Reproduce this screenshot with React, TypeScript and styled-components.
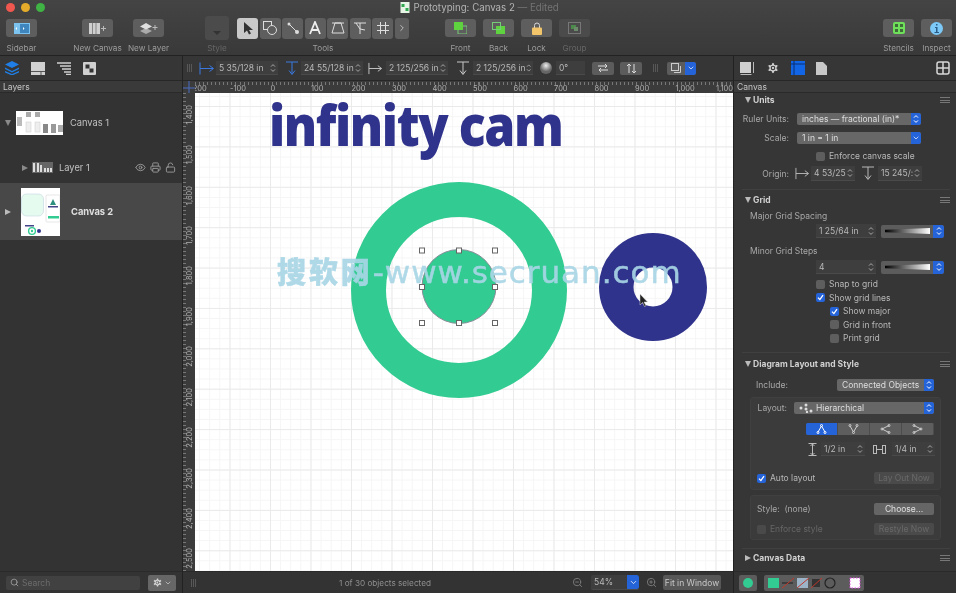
import React from 'react'
import styled, { createGlobalStyle } from 'styled-components'
import { Search, Settings, ZoomIn, ZoomOut, ChevronRight, ChevronDown, Eye, Printer, LockOpen } from 'lucide-react'

const Global = createGlobalStyle`
    html, body {
        margin: 0;
        width: 956px;
        height: 593px;
        overflow: hidden;
        background: #333;
    }
    * {
        box-sizing: border-box;
    }
`

const BLUE = '#2563d8'

const Root = styled.div`
    width: 956px;
    height: 593px;
    display: flex;
    flex-direction: column;
    background: #333;
    color: #cfcfcf;
    font-family: Inter, "Liberation Sans", sans-serif;
    font-size: 8.5px;
    filter: blur(0.55px);
    overflow: hidden;
    position: relative;
`

/* top toolbar */
const Toolbar = styled.div`
    height: 56px;
    flex: none;
    background: linear-gradient(#444, #393939);
    border-bottom: 1px solid #222;
`
const TitleRow = styled.div`
    height: 15px;
    display: flex;
    align-items: center;
    padding-left: 5.5px;
    position: relative;
`
const Light = styled.span<{ $c: string }>`
    width: 9.5px;
    height: 9.5px;
    border-radius: 50%;
    margin-right: 5.5px;
    background: ${p => p.$c};
`
const Title = styled.div`
    margin-left: 349px;
    display: flex;
    align-items: center;
    gap: 4px;
    font-size: 9.7px;
    color: #b4b4b4;
    white-space: nowrap;
    & em {
        font-style: normal;
        color: #747474;
    }
`
const ToolRow = styled.div`
    display: flex;
    padding-left: 6px;
`
const ToolItem = styled.div<{ $w: number; $ml?: number; $mr?: number; $auto?: boolean }>`
    width: ${p => p.$w}px;
    margin-left: ${p => (p.$auto ? 'auto' : `${p.$ml || 0}px`)};
    margin-right: ${p => p.$mr || 0}px;
    flex: none;
    display: flex;
    flex-direction: column;
    align-items: center;
`
const ToolSlot = styled.div`
    height: 26px;
    width: 100%;
    display: flex;
    align-items: center;
    justify-content: space-between;
    gap: 1px;
`
const ToolLabel = styled.div<{ $off?: boolean }>`
    margin-top: 2px;
    font-size: 8.2px;
    line-height: 11px;
    white-space: nowrap;
    color: ${p => (p.$off ? '#666' : '#9c9c9c')};
`
const ToolBtn = styled.div<{ $w?: number; $off?: boolean; $on?: boolean; $tall?: boolean }>`
    width: ${p => (p.$w ? `${p.$w}px` : '100%')};
    height: ${p => (p.$tall ? 24 : p.$w ? 21 : 18)}px;
    flex: none;
    border-radius: 3px;
    background: ${p => (p.$on ? '#c9c9c9' : p.$off ? '#4b4b4b' : '#5e5e5e')};
    display: flex;
    align-items: center;
    justify-content: center;
`

/* body */
const Body = styled.div`
    flex: 1;
    display: flex;
    min-height: 0;
`
const LeftPane = styled.div`
    width: 183px;
    flex: none;
    display: flex;
    flex-direction: column;
    background: #333;
    border-right: 1px solid #222;
`
const CenterPane = styled.div`
    flex: 1;
    display: flex;
    flex-direction: column;
    min-width: 0;
`
const RightPane = styled.div`
    width: 223px;
    flex: none;
    display: flex;
    flex-direction: column;
    background: #363636;
    border-left: 1px solid #222;
`
const TabBar = styled.div<{ $pl: number; $gap: number }>`
    height: 25px;
    flex: none;
    display: flex;
    align-items: center;
    gap: ${p => p.$gap}px;
    padding-left: ${p => p.$pl}px;
    border-bottom: 1px solid #272727;
    background: #363636;
`
const TabEnd = styled.span`
    margin-left: auto;
    margin-right: 6px;
    display: flex;
`
const PaneTitle = styled.div<{ $pl: number }>`
    height: 12px;
    flex: none;
    line-height: 12px;
    padding-left: ${p => p.$pl}px;
    font-size: 8.5px;
    color: #c4c4c4;
    background: #3a3a3a;
    border-bottom: 1px solid #2a2a2a;
`
const LayerList = styled.div`
    flex: 1;
    display: flex;
    flex-direction: column;
`
const LayerRow = styled.div<{ $h: number; $sel?: boolean; $pl: number }>`
    height: ${p => p.$h}px;
    padding-left: ${p => p.$pl}px;
    display: flex;
    align-items: center;
    background: ${p => (p.$sel ? '#484848' : 'transparent')};
    color: ${p => (p.$sel ? '#e0e0e0' : '#c0c0c0')};
    font-weight: ${p => (p.$sel ? 700 : 400)};
    font-size: 9.3px;
    white-space: nowrap;
`
const Thumb = styled.div<{ $w: number; $h: number; $ml: number; $mr: number; $bg?: string }>`
    width: ${p => p.$w}px;
    height: ${p => p.$h}px;
    margin-left: ${p => p.$ml}px;
    margin-right: ${p => p.$mr}px;
    flex: none;
    background: ${p => p.$bg || '#fff'};
    & svg {
        display: block;
    }
`
const LayerName = styled.span`
    width: 33px;
    flex: none;
`
const RowIcons = styled.div`
    margin-left: 43px;
    display: flex;
    gap: 4px;
    color: #9a9a9a;
`
const Tri = styled.span<{ $down?: boolean; $c?: string }>`
    width: 0;
    height: 0;
    flex: none;
    ${p =>
        p.$down
            ? `border-left: 3.5px solid transparent; border-right: 3.5px solid transparent; border-top: 6px solid ${p.$c || '#8a8a8a'};`
            : `border-top: 3.5px solid transparent; border-bottom: 3.5px solid transparent; border-left: 6px solid ${p.$c || '#8a8a8a'};`}
`
const PaneFooter = styled.div`
    height: 22px;
    flex: none;
    display: flex;
    align-items: center;
    padding-left: 6px;
    border-top: 1px solid #2a2a2a;
    background: #333;
`
const SearchBox = styled.div`
    width: 134px;
    height: 14px;
    border-radius: 2px;
    background: #414141;
    display: flex;
    align-items: center;
    gap: 3px;
    padding-left: 4px;
    color: #6c6c6c;
    font-size: 8.5px;
`
const GearBtn = styled.div`
    width: 28px;
    height: 16px;
    margin-left: 8px;
    border-radius: 2px;
    background: #666;
    color: #d8d8d8;
    display: flex;
    align-items: center;
    justify-content: center;
    gap: 1px;
`

/* format bar */
const FormatBar = styled.div`
    height: 25px;
    flex: none;
    display: flex;
    align-items: center;
    padding-left: 4px;
    background: #363636;
    border-bottom: 1px solid #272727;
`
const Grip = styled.span<{ $ml?: number }>`
    width: 6px;
    height: 8px;
    flex: none;
    margin-left: ${p => p.$ml || 0}px;
    background: repeating-linear-gradient(90deg, #585858 0 1px, transparent 1px 2px);
`
const IconWrap = styled.span<{ $w: number; $ml?: number }>`
    width: ${p => p.$w}px;
    margin-left: ${p => p.$ml || 0}px;
    flex: none;
    display: flex;
    align-items: center;
    justify-content: center;
    & svg {
        display: block;
    }
`
const Field = styled.div<{ $w: number; $ml?: number; $h?: number; $flush?: boolean }>`
    width: ${p => p.$w}px;
    height: ${p => p.$h || 14}px;
    margin-left: ${p => p.$ml || 0}px;
    flex: none;
    display: flex;
    align-items: center;
    justify-content: space-between;
    padding: 0 ${p => (p.$flush ? 0 : 2)}px 0 3px;
    background: #3e3e3e;
    border-bottom: 1px solid #4a4a4a;
    border-radius: ${p => (p.$flush ? 2 : 0)}px;
    color: #b8b8b8;
    font-size: 8.5px;
    white-space: nowrap;
    overflow: hidden;
`
const SmallBtn = styled.div<{ $w: number; $ml: number }>`
    width: ${p => p.$w}px;
    height: 13px;
    margin-left: ${p => p.$ml}px;
    flex: none;
    border-radius: 2px;
    background: #5c5c5c;
    display: flex;
    align-items: center;
    justify-content: center;
`
const BlueEnd = styled.span<{ $w?: number }>`
    width: ${p => p.$w || 10}px;
    align-self: stretch;
    flex: none;
    background: ${BLUE};
    border-radius: 0 2px 2px 0;
    display: flex;
    align-items: center;
    justify-content: center;
    color: #fff;
`
const Split = styled.div<{ $w: number; $ml: number }>`
    width: ${p => p.$w}px;
    height: 13px;
    margin-left: ${p => p.$ml}px;
    flex: none;
    display: flex;
    border-radius: 2px;
    background: #5c5c5c;
    overflow: hidden;
`
const SplitFace = styled.span`
    flex: 1;
    display: flex;
    align-items: center;
    justify-content: center;
`

/* rulers and canvas */
const TopRuler = styled.div`
    height: 12px;
    flex: none;
    display: flex;
    background: #3b3b3b;
    overflow: hidden;
`
const Corner = styled.div`
    width: 12px;
    flex: none;
    & svg {
        display: block;
    }
`
const RulerStrip = styled.div`
    flex: 1;
    overflow: hidden;
    background: repeating-linear-gradient(90deg, #777 0 1px, transparent 1px 4.05px) 0 1px / 100% 3px no-repeat;
`
const RulerCells = styled.div`
    display: flex;
    margin-left: -5.5px;
    padding-top: 3px;
`
const RulerCell = styled.span`
    width: 40.5px;
    flex: none;
    font-size: 7.5px;
    line-height: 9px;
    color: #b0b0b0;
    white-space: nowrap;
`
const Stage = styled.div`
    flex: 1;
    display: flex;
    min-height: 0;
`
const SideRuler = styled.div`
    width: 12px;
    flex: none;
    padding-top: 1.3px;
    background:
        repeating-linear-gradient(0deg, #777 0 1px, transparent 1px 4.04px) 0 0 / 3px 100% no-repeat,
        #3b3b3b;
    overflow: hidden;
`
const SideCell = styled.div`
    height: 40.4px;
    display: flex;
    align-items: center;
    justify-content: flex-end;
    padding-right: 1px;
    & span {
        writing-mode: vertical-rl;
        transform: rotate(180deg);
        font-size: 7.5px;
        line-height: 9px;
        color: #b0b0b0;
        white-space: nowrap;
    }
`
const Canvas = styled.div`
    flex: 1;
    position: relative;
    overflow: hidden;
    background-color: #fff;
    background-image:
        linear-gradient(90deg, #eaeaea 1px, transparent 1px),
        linear-gradient(#eaeaea 1px, transparent 1px),
        linear-gradient(90deg, #f5f5f5 1px, transparent 1px),
        linear-gradient(#f5f5f5 1px, transparent 1px);
    background-size: 40.5px 40.4px, 40.5px 40.4px, 10.125px 10.1px, 10.125px 10.1px;
    background-position: 34.5px 13px, 34.5px 13px, 4.1px 3px, 4.1px 3px;
`
const Drawing = styled.svg`
    position: absolute;
    left: 0;
    top: 0;
`
const Logo = styled.div`
    position: absolute;
    left: 73.5px;
    top: -2px;
    font-family: "Open Sans", "Noto Sans", sans-serif;
    font-weight: 800;
    font-size: 57px;
    line-height: 66px;
    letter-spacing: -1.6px;
    color: #30338b;
    white-space: nowrap;
    transform: scaleX(0.875);
    transform-origin: left top;
`
const Watermark = styled.div`
    position: absolute;
    left: 82px;
    top: 161px;
    font-family: "DejaVu Sans", "Noto Sans CJK SC", sans-serif;
    font-size: 31px;
    line-height: 32px;
    letter-spacing: 0.95px;
    -webkit-text-stroke: 0.5px #a9d6e6;
    color: #a9d6e6;
    opacity: 0.92;
    white-space: nowrap;
    pointer-events: none;
    & b {
        font-family: "Noto Sans CJK SC", sans-serif;
        font-weight: 900;
        font-size: 29px;
        letter-spacing: 2.9px;
    }
`
const StatusBar = styled.div`
    height: 22px;
    flex: none;
    display: flex;
    align-items: center;
    padding-left: 8px;
    background: #333;
    border-top: 1px solid #2a2a2a;
`
const StatusText = styled.div`
    width: 300px;
    margin-left: 38px;
    margin-right: 35px;
    text-align: center;
    color: #8f8f8f;
    font-size: 8.2px;
    white-space: nowrap;
`
const FitBtn = styled.div`
    width: 58px;
    height: 15px;
    margin-left: 5px;
    border-radius: 2px;
    background: #575757;
    color: #c8c8c8;
    font-size: 8.5px;
    display: flex;
    align-items: center;
    justify-content: center;
    white-space: nowrap;
`

/* inspector */
const Inspector = styled.div`
    flex: 1;
    padding: 0 6px 0 8px;
    display: flex;
    flex-direction: column;
    min-height: 0;
`
const SectionHead = styled.div<{ $mt: number }>`
    margin-top: ${p => p.$mt}px;
    height: 12px;
    display: flex;
    align-items: center;
    gap: 2px;
    padding-left: 3px;
    font-weight: 700;
    font-size: 8.5px;
    color: #d0d0d0;
    white-space: nowrap;
`
const MenuLines = styled.span`
    width: 10px;
    height: 6px;
    margin-left: auto;
    flex: none;
    border-top: 1px solid #777;
    border-bottom: 1px solid #777;
    background: linear-gradient(#777, #777) 0 50% / 100% 1px no-repeat;
`
const Rule = styled.div<{ $mt: number }>`
    margin-top: ${p => p.$mt}px;
    height: 1px;
    background: #404040;
    flex: none;
`
const FormRow = styled.div<{ $mt: number; $pl?: number }>`
    margin-top: ${p => p.$mt}px;
    padding-left: ${p => p.$pl || 0}px;
    display: flex;
    align-items: center;
    flex: none;
    min-height: 12px;
`
const FormLabel = styled.div<{ $w?: number; $right?: boolean }>`
    width: ${p => (p.$w ? `${p.$w}px` : 'auto')};
    flex: none;
    text-align: ${p => (p.$right ? 'right' : 'left')};
    color: #a8a8a8;
    font-size: 8.5px;
    white-space: nowrap;
`
const Popup = styled.div<{ $w: number; $ml?: number }>`
    width: ${p => p.$w}px;
    height: 12px;
    margin-left: ${p => p.$ml || 0}px;
    flex: none;
    display: flex;
    align-items: center;
    justify-content: space-between;
    padding-left: 5px;
    border-radius: 2px;
    background: #676767;
    color: #dedede;
    font-size: 8.5px;
    white-space: nowrap;
    overflow: hidden;
`
const PopupText = styled.span`
    display: flex;
    align-items: center;
    gap: 3px;
`
const Swatch = styled.div<{ $ml: number }>`
    width: 63px;
    height: 13px;
    margin-left: ${p => p.$ml}px;
    flex: none;
    display: flex;
    align-items: center;
    padding-left: 4px;
    border-radius: 2px;
    background: #5c5c5c;
    overflow: hidden;
`
const Gradient = styled.span`
    width: 45px;
    height: 6px;
    margin-right: auto;
    background: linear-gradient(90deg, #000, #fff);
    clip-path: polygon(0 30%, 100% 0, 100% 100%, 0 70%);
`
const CheckBox = styled.span<{ $on?: boolean; $dim?: boolean }>`
    width: 9px;
    height: 9px;
    flex: none;
    border-radius: 2px;
    background: ${p => (p.$on ? BLUE : p.$dim ? '#4a4a4a' : '#5e5e5e')};
    display: flex;
    align-items: center;
    justify-content: center;
    & svg {
        display: block;
    }
`
const CheckText = styled.span<{ $dim?: boolean }>`
    margin-left: 4px;
    color: ${p => (p.$dim ? '#666' : '#b8b8b8')};
    font-size: 8.5px;
    white-space: nowrap;
`
const Group = styled.div<{ $mt: number; $h: number }>`
    margin-top: ${p => p.$mt}px;
    margin-left: 8px;
    width: 191px;
    height: ${p => p.$h}px;
    flex: none;
    padding: 0 6px;
    border-radius: 3px;
    background: #3b3b3b;
    border: 1px solid #404040;
    display: flex;
    flex-direction: column;
`
const Segments = styled.div`
    width: 128px;
    height: 12px;
    margin-left: 49px;
    display: flex;
    border-radius: 2px;
    overflow: hidden;
    background: #5e5e5e;
`
const Segment = styled.span<{ $on?: boolean }>`
    flex: 1;
    display: flex;
    align-items: center;
    justify-content: center;
    background: ${p => (p.$on ? BLUE : 'transparent')};
    border-right: 1px solid #4c4c4c;
`
const PanelBtn = styled.div<{ $off?: boolean }>`
    width: 60px;
    height: 12px;
    margin-left: auto;
    flex: none;
    border-radius: 2px;
    background: ${p => (p.$off ? '#4a4a4a' : '#656565')};
    color: ${p => (p.$off ? '#696969' : '#e0e0e0')};
    font-size: 8.5px;
    display: flex;
    align-items: center;
    justify-content: center;
    white-space: nowrap;
`
const InspectorFooter = styled.div`
    height: 22px;
    flex: none;
    display: flex;
    align-items: center;
    padding-left: 5px;
    background: #333;
    border-top: 1px solid #2a2a2a;
`
const DotBtn = styled.div`
    width: 18px;
    height: 16px;
    border-radius: 2px;
    background: #5c5c5c;
    display: flex;
    align-items: center;
    justify-content: center;
    & span {
        width: 10px;
        height: 10px;
        border-radius: 50%;
        background: #32cb91;
    }
`
const StyleStrip = styled.div`
    width: 100px;
    height: 16px;
    margin-left: 7px;
    border-radius: 2px;
    background: #5c5c5c;
    & svg {
        display: block;
    }
`

const Updown = () => (
    <svg width="6" height="10" viewBox="0 0 6 10" fill="none" stroke="#a8a8a8" strokeWidth="1">
        <path d="M1 3.6 3 1.6 5 3.6M1 6.4 3 8.4 5 6.4" />
    </svg>
)
const UpdownWhite = () => (
    <svg width="6" height="10" viewBox="0 0 6 10" fill="none" stroke="#fff" strokeWidth="1">
        <path d="M1 3.6 3 1.6 5 3.6M1 6.4 3 8.4 5 6.4" />
    </svg>
)
const Tick = () => (
    <svg width="7" height="7" viewBox="0 0 7 7" fill="none" stroke="#fff" strokeWidth="1.3">
        <path d="M1 3.6 2.9 5.6 6 1.2" />
    </svg>
)
const HArrow = ({ c, w = 16 }: { c: string; w?: number }) => (
    <svg width={w} height="13" viewBox="0 0 16 13" fill="none" stroke={c} strokeWidth="1">
        <path d="M1 .5v12M1 6.5h13M10.5 3.5l4 3-4 3" />
    </svg>
)
const VArrow = ({ c }: { c: string }) => (
    <svg width="14" height="15" viewBox="0 0 14 15" fill="none" stroke={c} strokeWidth="1">
        <path d="M1 1h12M7 1v12M4 9.5l3 4 3-4" />
    </svg>
)

const LayersThumb = () => (
    <svg width="47" height="24" viewBox="0 0 47 24">
        <rect x="1" y="6" width="5" height="9" fill="#bbb" />
        <rect x="10" y="1" width="5" height="5" fill="#aaa" />
        <rect x="19" y="1" width="5" height="5" fill="#aaa" />
        <rect x="10" y="11" width="5" height="10" fill="#eee" stroke="#ccc" strokeWidth=".5" />
        <rect x="19" y="11" width="5" height="10" fill="#eee" stroke="#ccc" strokeWidth=".5" />
        <rect x="27" y="13" width="5" height="9" fill="#888" />
        <rect x="35" y="13" width="5" height="9" fill="#999" />
        <rect x="42" y="14" width="5" height="7" fill="#aaa" />
    </svg>
)
const Canvas2Thumb = () => (
    <svg width="39" height="48" viewBox="0 0 39 48">
        <rect x=".5" y="6" width="22" height="22" rx="5" fill="#e6fbef" stroke="#bcd" strokeWidth=".5" />
        <rect x="25" y="7" width="14" height="27" rx="1" fill="#fff" stroke="#ccc" strokeWidth=".5" />
        <path d="M32 11l3 6h-6z" fill="#2f8f7f" />
        <rect x="27" y="18" width="10" height="1.5" fill="#448" />
        <rect x="27" y="28" width="11" height="2.5" fill="#32cb91" />
        <rect x="4" y="37" width="9" height="1.5" fill="#448" />
        <circle cx="11" cy="43" r="3.4" fill="none" stroke="#32cb91" strokeWidth="1.4" />
        <circle cx="11" cy="43" r="1.2" fill="#32cb91" />
        <circle cx="18" cy="43" r="2" fill="#30338b" />
    </svg>
)

const hRuler = ['-200', '-100', '0', '100', '200', '300', '400', '500', '600', '700', '800', '900', '1,000', '1,100']
const vRuler = ['1,400', '1,500', '1,600', '1,700', '1,800', '1,900', '2,000', '2,100', '2,200', '2,300', '2,400', '2,500']
const handles = [
    [227, 157.5], [264, 157.5], [300, 157.5],
    [227, 194], [300, 194],
    [227, 230], [264, 230], [300, 230],
]

const App = () => {
    return (
        <Root>
            <Global />
            <Toolbar>
                <TitleRow>
                    <Light $c="#f0584f" />
                    <Light $c="#e4ac2a" />
                    <Light $c="#3fb344" />
                    <Title>
                        <svg width="10" height="11" viewBox="0 0 9 11"><rect width="9" height="11" fill="#e6f5e6" /><path d="M1 2h3v3H1zM5 6h3v3H5z" fill="#2fa84f" /></svg>
                        <span>Prototyping: Canvas 2 <em>— Edited</em></span>
                    </Title>
                </TitleRow>
                <ToolRow>
                    <ToolItem $w={31}>
                        <ToolSlot>
                            <ToolBtn>
                                <svg width="16" height="11" viewBox="0 0 16 11"><rect width="16" height="11" fill="#7cc3f0" /><rect x="6" y="1" width="9" height="9" fill="#3e86bd" /><path d="M3 4 1.5 5.5 3 7zM9 4l1.5 1.5L9 7z" fill="#fff" /></svg>
                            </ToolBtn>
                        </ToolSlot>
                        <ToolLabel>Sidebar</ToolLabel>
                    </ToolItem>
                    <ToolItem $w={31} $ml={45}>
                        <ToolSlot>
                            <ToolBtn>
                                <svg width="18" height="11" viewBox="0 0 18 11"><rect width="11" height="11" fill="#cfcfcf" /><path d="M3.5 0v11M7 0v11" stroke="#666" strokeWidth=".7" /><path d="M14.5 3v5M12 5.5h5" stroke="#bbb" /></svg>
                            </ToolBtn>
                        </ToolSlot>
                        <ToolLabel>New Canvas</ToolLabel>
                    </ToolItem>
                    <ToolItem $w={31} $ml={20}>
                        <ToolSlot>
                            <ToolBtn>
                                <svg width="18" height="12" viewBox="0 0 18 12"><path d="M6 6 0 9l6 3 6-3z" fill="#aaa" /><path d="M6 1 0 4.500l6 3 6-3z" fill="#e0e0e0" /><path d="M15 3v5M12.500 5.500h5" stroke="#bbb" /></svg>
                            </ToolBtn>
                        </ToolSlot>
                        <ToolLabel>New Layer</ToolLabel>
                    </ToolItem>
                    <ToolItem $w={24} $ml={41}>
                        <ToolSlot>
                            <ToolBtn $off $tall>
                                <svg width="8" height="14" viewBox="0 0 8 14"><path d="M0 10h8l-4 4z" fill="#333" /></svg>
                            </ToolBtn>
                        </ToolSlot>
                        <ToolLabel $off>Style</ToolLabel>
                    </ToolItem>
                    <ToolItem $w={172} $ml={8}>
                        <ToolSlot>
                            <ToolBtn $w={21} $on>
                                <svg width="10" height="13" viewBox="0 0 10 13"><path d="M1 0v11l3-2.500 2 4 2-1-2-3.500h4z" fill="#333" /></svg>
                            </ToolBtn>
                            <ToolBtn $w={21}>
                                <svg width="14" height="14" viewBox="0 0 14 14" fill="none" stroke="#ddd"><rect x=".5" y=".5" width="8" height="8" /><circle cx="9" cy="9" r="4.500" fill="#5e5e5e" /></svg>
                            </ToolBtn>
                            <ToolBtn $w={21}>
                                <svg width="14" height="14" viewBox="0 0 14 14" fill="#ddd"><circle cx="3" cy="3" r="1.500" /><circle cx="11" cy="11" r="2" /><path d="M3 3l8 8" stroke="#ddd" /></svg>
                            </ToolBtn>
                            <ToolBtn $w={21}>
                                <svg width="14" height="14" viewBox="0 0 14 14" fill="none" stroke="#eee" strokeWidth="1.800"><path d="M2 13 7 1l5 12M4 9h6" /></svg>
                            </ToolBtn>
                            <ToolBtn $w={21}>
                                <svg width="14" height="14" viewBox="0 0 14 14" fill="none" stroke="#ddd"><path d="M4 2h6l3 10H1zM1 2h12" /></svg>
                            </ToolBtn>
                            <ToolBtn $w={21}>
                                <svg width="14" height="14" viewBox="0 0 14 14" fill="none" stroke="#ddd"><path d="M1 2h12M7 2v11M3 2l4 6 5 1" /></svg>
                            </ToolBtn>
                            <ToolBtn $w={21}>
                                <svg width="14" height="14" viewBox="0 0 14 14" fill="none" stroke="#ddd"><path d="M4.500 1v12M9.500 1v12M1 4.500h12M1 9.500h12" /></svg>
                            </ToolBtn>
                            <ToolBtn $w={14}>
                                <ChevronRight size={10} color="#cfcfcf" />
                            </ToolBtn>
                        </ToolSlot>
                        <ToolLabel>Tools</ToolLabel>
                    </ToolItem>
                    <ToolItem $w={31} $ml={36}>
                        <ToolSlot>
                            <ToolBtn>
                                <svg width="13" height="12" viewBox="0 0 13 12"><rect x="4" y="4" width="9" height="8" fill="none" stroke="#7c7" /><rect width="9" height="8" fill="#5fd23f" /></svg>
                            </ToolBtn>
                        </ToolSlot>
                        <ToolLabel>Front</ToolLabel>
                    </ToolItem>
                    <ToolItem $w={31} $ml={7}>
                        <ToolSlot>
                            <ToolBtn>
                                <svg width="13" height="12" viewBox="0 0 13 12"><rect x="4" y="4" width="9" height="8" fill="#5fd23f" /><rect x=".5" y=".5" width="8" height="7" fill="none" stroke="#7c7" /></svg>
                            </ToolBtn>
                        </ToolSlot>
                        <ToolLabel>Back</ToolLabel>
                    </ToolItem>
                    <ToolItem $w={31} $ml={7}>
                        <ToolSlot>
                            <ToolBtn>
                                <svg width="10" height="13" viewBox="0 0 10 13"><path d="M2.500 6V3.500a2.500 2.500 0 0 1 5 0V6" fill="none" stroke="#d8d8d8" /><rect y="5.500" width="10" height="7.500" rx="1" fill="#f3c56a" /></svg>
                            </ToolBtn>
                        </ToolSlot>
                        <ToolLabel>Lock</ToolLabel>
                    </ToolItem>
                    <ToolItem $w={31} $ml={7}>
                        <ToolSlot>
                            <ToolBtn $off>
                                <svg width="13" height="12" viewBox="0 0 13 12"><rect x=".5" y=".5" width="12" height="11" fill="none" stroke="#777" /><rect x="3" y="3" width="5" height="4" fill="#4c8a4c" /><rect x="6" y="5" width="4" height="4" fill="#6a8a6a" /></svg>
                            </ToolBtn>
                        </ToolSlot>
                        <ToolLabel $off>Group</ToolLabel>
                    </ToolItem>
                    <ToolItem $w={31} $auto>
                        <ToolSlot>
                            <ToolBtn>
                                <svg width="12" height="12" viewBox="0 0 12 12"><rect width="12" height="12" rx="2" fill="#6ee05a" /><path d="M2 2h3v3H2zM7 2h3v3H7zM2 7h3v3H2zM7 7h3v3H7z" fill="#3e6a3a" /></svg>
                            </ToolBtn>
                        </ToolSlot>
                        <ToolLabel>Stencils</ToolLabel>
                    </ToolItem>
                    <ToolItem $w={31} $ml={7} $mr={4}>
                        <ToolSlot>
                            <ToolBtn>
                                <svg width="13" height="13" viewBox="0 0 13 13"><circle cx="6.500" cy="6.500" r="6.500" fill="#7cc8f7" /><path d="M6 2h1.500v1.500H6zM5 5h2.500v5H9v1H4.500v-1H6V6H5z" fill="#2b5d86" /></svg>
                            </ToolBtn>
                        </ToolSlot>
                        <ToolLabel>Inspect</ToolLabel>
                    </ToolItem>
                </ToolRow>
            </Toolbar>
            <Body>
                <LeftPane>
                    <TabBar $pl={5} $gap={12}>
                        <svg width="14" height="14" viewBox="0 0 14 14" fill="#1f7fe6"><path d="M7 0 14 3.500 7 7 0 3.500z" /><path d="M0 6.500 7 10l7-3.500v1.500L7 11.500 0 8z" /><path d="M0 10 7 13l7-3v1.500L7 14.500 0 11.500z" /></svg>
                        <svg width="14" height="13" viewBox="0 0 14 13"><rect width="14" height="13" fill="#d0d0d0" /><path d="M0 9.500h14M10 9.500V13" stroke="#555" /></svg>
                        <svg width="14" height="13" viewBox="0 0 14 13" stroke="#cfcfcf" strokeWidth="1.300"><path d="M0 1h14M3 4h11M5 7h9M7 10h7M9 12.500h5" /></svg>
                        <svg width="13" height="13" viewBox="0 0 13 13"><rect width="13" height="13" rx="1" fill="#d0d0d0" /><rect x="2.500" y="2.500" width="4" height="4" fill="#333" /><rect x="6.500" y="6.500" width="4" height="4" fill="#333" /></svg>
                    </TabBar>
                    <PaneTitle $pl={3}>Layers</PaneTitle>
                    <LayerList>
                        <LayerRow $h={59} $pl={5}>
                            <Tri $down />
                            <Thumb $w={47} $h={24} $ml={5} $mr={7}><LayersThumb /></Thumb>
                            Canvas 1
                        </LayerRow>
                        <LayerRow $h={31} $pl={22}>
                            <Tri />
                            <Thumb $w={21} $h={11} $ml={4} $mr={6} $bg="#666">
                                <svg width="21" height="11" viewBox="0 0 21 11" fill="#ddd"><rect x="1" y="1" width="2" height="9" /><rect x="5" y="1" width="2" height="9" /><rect x="8" y="3" width="2" height="7" /><rect x="12" y="6" width="2" height="4" /><rect x="15" y="6" width="2" height="4" /><rect x="18" y="6" width="2" height="4" /></svg>
                            </Thumb>
                            <LayerName>Layer 1</LayerName>
                            <RowIcons>
                                <Eye size={11} />
                                <Printer size={11} />
                                <LockOpen size={11} />
                            </RowIcons>
                        </LayerRow>
                        <LayerRow $h={57} $pl={5} $sel>
                            <Tri $c="#bbb" />
                            <Thumb $w={39} $h={48} $ml={10} $mr={11}><Canvas2Thumb /></Thumb>
                            Canvas 2
                        </LayerRow>
                    </LayerList>
                    <PaneFooter>
                        <SearchBox>
                            <Search size={9} color="#aaa" />
                            Search
                        </SearchBox>
                        <GearBtn>
                            <Settings size={11} fill="#d8d8d8" color="#666" />
                            <ChevronDown size={8} />
                        </GearBtn>
                    </PaneFooter>
                </LeftPane>
                <CenterPane>
                    <FormatBar>
                        <Grip />
                        <IconWrap $w={16} $ml={6}><HArrow c="#3a78e0" /></IconWrap>
                        <Field $w={62} $ml={1}>5 35/128 in <Updown /></Field>
                        <IconWrap $w={15} $ml={6}><VArrow c="#3a78e0" /></IconWrap>
                        <Field $w={62} $ml={2}>24 55/128 in <Updown /></Field>
                        <IconWrap $w={15} $ml={5}><HArrow c="#c8c8c8" /></IconWrap>
                        <Field $w={62} $ml={3}>2 125/256 in <Updown /></Field>
                        <IconWrap $w={15} $ml={7}><VArrow c="#c8c8c8" /></IconWrap>
                        <Field $w={60} $ml={3}>2 125/256 in <Updown /></Field>
                        <IconWrap $w={12} $ml={7}>
                            <svg width="12" height="12" viewBox="0 0 12 12"><defs><radialGradient id="knob" cx=".5" cy=".3"><stop offset="0" stopColor="#eee" /><stop offset="1" stopColor="#666" /></radialGradient></defs><circle cx="6" cy="6" r="6" fill="url(#knob)" /></svg>
                        </IconWrap>
                        <Field $w={29} $ml={4}>0°</Field>
                        <SmallBtn $w={22} $ml={7}>
                            <svg width="12" height="10" viewBox="0 0 12 10" fill="none" stroke="#ddd"><path d="M1 3h9M8 1l2 2-2 2M11 7H2M4 5 2 7l2 2" /></svg>
                        </SmallBtn>
                        <SmallBtn $w={22} $ml={6}>
                            <svg width="11" height="11" viewBox="0 0 11 11" fill="none" stroke="#ddd"><path d="M3 10V1M1 3l2-2 2 2M8 1v9M6 8l2 2 2-2" /></svg>
                        </SmallBtn>
                        <Grip $ml={11} />
                        <Split $w={29} $ml={8}>
                            <SplitFace>
                                <svg width="10" height="10" viewBox="0 0 10 10" fill="none" stroke="#ccc"><rect x=".5" y=".5" width="7" height="7" /><path d="M9.500 3v6.500H3" /></svg>
                            </SplitFace>
                            <BlueEnd $w={11}><ChevronDown size={8} /></BlueEnd>
                        </Split>
                    </FormatBar>
                    <TopRuler>
                        <Corner>
                            <svg width="12" height="12" viewBox="0 0 12 12" stroke="#4a6fc0"><path d="M6 0v12M0 7h12" /></svg>
                        </Corner>
                        <RulerStrip>
                            <RulerCells>
                                {hRuler.map(t => <RulerCell key={t}>{t}</RulerCell>)}
                            </RulerCells>
                        </RulerStrip>
                    </TopRuler>
                    <Stage>
                        <SideRuler>
                            {vRuler.map(t => <SideCell key={t}><span>{t}</span></SideCell>)}
                        </SideRuler>
                        <Canvas>
                            <Logo>infinity cam</Logo>
                            <Drawing width="538" height="478" viewBox="0 0 538 478">
                                <circle cx="264" cy="197" r="90.500" fill="none" stroke="#32cb91" strokeWidth="35" />
                                <circle cx="264" cy="193.500" r="37" fill="#32cb91" stroke="#8a8f99" strokeWidth="1" />
                                {handles.map(([x, y]) => (
                                    <rect key={`${x}-${y}`} x={x - 2.5} y={y - 2.5} width="5" height="5" fill="#fff" stroke="#666" strokeWidth="1" />
                                ))}
                                <circle cx="458" cy="194" r="36.750" fill="none" stroke="#30338b" strokeWidth="34.500" />
                                <path d="M445 201v11l2.500-2.500 2 4 1.500-.7-2-3.800h3.500z" fill="#222" stroke="#ddd" strokeWidth=".5" />
                            </Drawing>
                            <Watermark><b>搜软网</b>-www.secruan.com</Watermark>
                        </Canvas>
                    </Stage>
                    <StatusBar>
                        <Grip />
                        <StatusText>1 of 30 objects selected</StatusText>
                        <IconWrap $w={14}><ZoomOut size={11} color="#7c7c7c" /></IconWrap>
                        <Field $w={48} $ml={7} $h={15} $flush>
                            54%
                            <BlueEnd $w={12}><ChevronDown size={9} /></BlueEnd>
                        </Field>
                        <IconWrap $w={14} $ml={5}><ZoomIn size={11} color="#7c7c7c" /></IconWrap>
                        <FitBtn>Fit in Window</FitBtn>
                    </StatusBar>
                </CenterPane>
                <RightPane>
                    <TabBar $pl={6} $gap={11}>
                        <svg width="15" height="14" viewBox="0 0 15 14"><rect width="11" height="11" y="1" fill="#d0d0d0" /><path d="M13.500 1v11M.5 13.500h11" stroke="#bbb" /></svg>
                        <Settings size={14} fill="#d0d0d0" color="#363636" />
                        <svg width="14" height="14" viewBox="0 0 14 14"><rect width="14" height="14" fill="#1266e6" /><path d="M3 0v14M0 3h14" stroke="#0a2f70" /></svg>
                        <svg width="11" height="13" viewBox="0 0 11 13"><path d="M0 0h7l4 4v9H0z" fill="#c8c8c8" /></svg>
                        <TabEnd>
                            <svg width="14" height="14" viewBox="0 0 14 14" fill="none" stroke="#d8d8d8" strokeWidth="1.500"><rect x="1" y="1" width="12" height="12" rx="2" /><path d="M7 1v12M1 7h12" /></svg>
                        </TabEnd>
                    </TabBar>
                    <PaneTitle $pl={3}>Canvas</PaneTitle>
                    <Inspector>
                        <SectionHead $mt={1}><Tri $down $c="#bbb" />Units<MenuLines /></SectionHead>
                        <FormRow $mt={7}>
                            <FormLabel $w={47} $right>Ruler Units:</FormLabel>
                            <Popup $w={124} $ml={8}>inches — fractional (in)*<BlueEnd><UpdownWhite /></BlueEnd></Popup>
                        </FormRow>
                        <FormRow $mt={7}>
                            <FormLabel $w={47} $right>Scale:</FormLabel>
                            <Popup $w={124} $ml={8}>1 in = 1 in<BlueEnd><ChevronDown size={8} /></BlueEnd></Popup>
                        </FormRow>
                        <FormRow $mt={6} $pl={74}>
                            <CheckBox />
                            <CheckText>Enforce canvas scale</CheckText>
                        </FormRow>
                        <FormRow $mt={4}>
                            <FormLabel $w={47} $right>Origin:</FormLabel>
                            <IconWrap $w={15} $ml={6}><HArrow c="#b8b8b8" /></IconWrap>
                            <Field $w={44} $ml={1} $h={15}>4 53/25 <Updown /></Field>
                            <IconWrap $w={14} $ml={6}><VArrow c="#b8b8b8" /></IconWrap>
                            <Field $w={44} $ml={3} $h={15}>15 245/: <Updown /></Field>
                        </FormRow>
                        <Rule $mt={8} />
                        <SectionHead $mt={4}><Tri $down $c="#bbb" />Grid<MenuLines /></SectionHead>
                        <FormRow $mt={4} $pl={8}><FormLabel>Major Grid Spacing</FormLabel></FormRow>
                        <FormRow $mt={2} $pl={74}>
                            <Field $w={60} $h={14}>1 25/64 in <Updown /></Field>
                            <Swatch $ml={5}><Gradient /><BlueEnd $w={11}><UpdownWhite /></BlueEnd></Swatch>
                        </FormRow>
                        <FormRow $mt={7} $pl={8}><FormLabel>Minor Grid Steps</FormLabel></FormRow>
                        <FormRow $mt={3} $pl={74}>
                            <Field $w={60} $h={14}>4 <Updown /></Field>
                            <Swatch $ml={5}><Gradient /><BlueEnd $w={11}><UpdownWhite /></BlueEnd></Swatch>
                        </FormRow>
                        <FormRow $mt={4} $pl={74}><CheckBox /><CheckText>Snap to grid</CheckText></FormRow>
                        <FormRow $mt={1.5} $pl={74}><CheckBox $on><Tick /></CheckBox><CheckText>Show grid lines</CheckText></FormRow>
                        <FormRow $mt={1.5} $pl={88}><CheckBox $on><Tick /></CheckBox><CheckText>Show major</CheckText></FormRow>
                        <FormRow $mt={1.5} $pl={88}><CheckBox /><CheckText>Grid in front</CheckText></FormRow>
                        <FormRow $mt={1.5} $pl={88}><CheckBox /><CheckText>Print grid</CheckText></FormRow>
                        <Rule $mt={8} />
                        <SectionHead $mt={5}><Tri $down $c="#bbb" />Diagram Layout and Style<MenuLines /></SectionHead>
                        <FormRow $mt={9} $pl={14}>
                            <FormLabel $w={81}>Include:</FormLabel>
                            <Popup $w={97}>Connected Objects<BlueEnd><UpdownWhite /></BlueEnd></Popup>
                        </FormRow>
                        <Group $mt={6} $h={93}>
                            <FormRow $mt={4}>
                                <FormLabel $w={30} $right>Layout:</FormLabel>
                                <Popup $w={140} $ml={7}>
                                    <PopupText>
                                        <svg width="14" height="10" viewBox="0 0 14 10" fill="#ddd"><circle cx="7" cy="2" r="1.500" /><circle cx="2" cy="5" r="1.500" /><circle cx="7" cy="6" r="1.500" /><circle cx="12" cy="8" r="1.500" /><circle cx="8" cy="9" r="1.200" /></svg>
                                        Hierarchical
                                    </PopupText>
                                    <BlueEnd><UpdownWhite /></BlueEnd>
                                </Popup>
                            </FormRow>
                            <FormRow $mt={9}>
                                <Segments>
                                    <Segment $on><svg width="11" height="10" viewBox="0 0 11 10" fill="none" stroke="#fff"><path d="M5.500 2 2 8M5.500 2 9 8" /><circle cx="5.500" cy="1.500" r="1" /><circle cx="2" cy="8.500" r="1" /><circle cx="9" cy="8.500" r="1" /></svg></Segment>
                                    <Segment><svg width="11" height="10" viewBox="0 0 11 10" fill="none" stroke="#ccc"><path d="M2 2l3.500 6L9 2" /><circle cx="2" cy="1.500" r="1" /><circle cx="9" cy="1.500" r="1" /><circle cx="5.500" cy="8.500" r="1" /></svg></Segment>
                                    <Segment><svg width="11" height="10" viewBox="0 0 11 10" fill="none" stroke="#ccc"><path d="M2 5l7-3.500M2 5l7 3.500" /><circle cx="2" cy="5" r="1" /><circle cx="9" cy="1.500" r="1" /><circle cx="9" cy="8.500" r="1" /></svg></Segment>
                                    <Segment><svg width="11" height="10" viewBox="0 0 11 10" fill="none" stroke="#ccc"><path d="M9 5 2 1.500M9 5 2 8.500" /><circle cx="9" cy="5" r="1" /><circle cx="2" cy="1.500" r="1" /><circle cx="2" cy="8.500" r="1" /></svg></Segment>
                                </Segments>
                            </FormRow>
                            <FormRow $mt={7} $pl={51}>
                                <IconWrap $w={9}>
                                    <svg width="9" height="13" viewBox="0 0 9 13" fill="none" stroke="#bbb"><path d="M.5.5h8M.5 12.500h8M4.500 1v11M2.500 3 4.500 1l2 2M2.500 10l2 2 2-2" /></svg>
                                </IconWrap>
                                <Field $w={44} $ml={4} $h={14}>1/2 in <Updown /></Field>
                                <IconWrap $w={13} $ml={8}>
                                    <svg width="13" height="9" viewBox="0 0 13 9" fill="none" stroke="#bbb"><rect x=".5" y=".5" width="3" height="8" /><rect x="9.500" y=".5" width="3" height="8" /><path d="M4 4.500h5" /></svg>
                                </IconWrap>
                                <Field $w={43} $ml={6} $h={14}>1/4 in <Updown /></Field>
                            </FormRow>
                            <FormRow $mt={16}>
                                <CheckBox $on><Tick /></CheckBox>
                                <CheckText>Auto layout</CheckText>
                                <PanelBtn $off>Lay Out Now</PanelBtn>
                            </FormRow>
                        </Group>
                        <Group $mt={5} $h={45}>
                            <FormRow $mt={7}>
                                <FormLabel>Style:&nbsp; (none)</FormLabel>
                                <PanelBtn>Choose...</PanelBtn>
                            </FormRow>
                            <FormRow $mt={8}>
                                <CheckBox $dim />
                                <CheckText $dim>Enforce style</CheckText>
                                <PanelBtn $off>Restyle Now</PanelBtn>
                            </FormRow>
                        </Group>
                        <Rule $mt={8} />
                        <SectionHead $mt={3}><Tri $c="#bbb" />Canvas Data<MenuLines /></SectionHead>
                    </Inspector>
                    <InspectorFooter>
                        <DotBtn><span /></DotBtn>
                        <StyleStrip>
                            <svg width="100" height="16" viewBox="0 0 100 16">
                                <rect x="4" y="3" width="11" height="10" fill="#32cb91" />
                                <path d="M18 8h11" stroke="#333" strokeWidth="1.500" />
                                <path d="M18 13 30 3" stroke="#c0392b" />
                                <rect x="33" y="3" width="11" height="10" fill="#9db4c8" />
                                <path d="M33 13 45 3" stroke="#c0392b" />
                                <rect x="48" y="4" width="8" height="8" fill="#333" />
                                <path d="M47 13 58 3" stroke="#c0392b" />
                                <circle cx="66" cy="8" r="5" fill="none" stroke="#222" strokeWidth="1.200" />
                                <rect x="86" y="3" width="10" height="10" fill="#fff" stroke="#e04ae0" strokeDasharray="1.500 1.500" />
                            </svg>
                        </StyleStrip>
                    </InspectorFooter>
                </RightPane>
            </Body>
        </Root>
    )
}

export default App
